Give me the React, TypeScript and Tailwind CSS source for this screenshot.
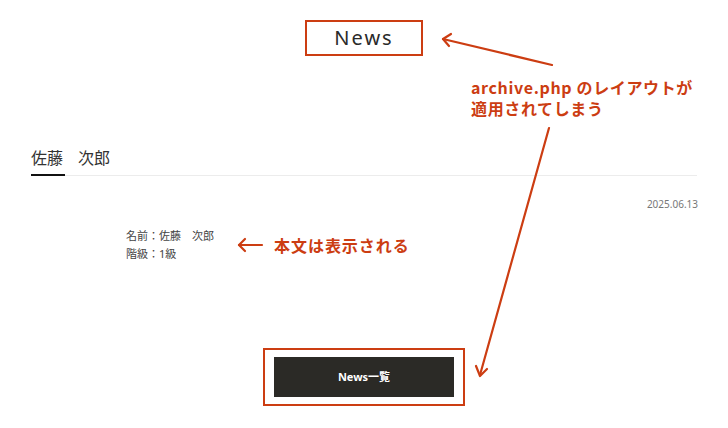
import React from "react";

const RED = "#cc3d12";

export default function App() {
  return (
    <div
      className="relative w-[728px] h-[428px] overflow-hidden bg-white text-[#333]"
      style={{ fontFamily: '"Noto Sans", "Noto Sans CJK JP", sans-serif' }}
    >
      {/* Header */}
      <div className="flex justify-center pt-[20px]">
        <div className="flex h-[36px] w-[118px] items-center justify-center border-2 border-[#cc3d12]">
          <span className="text-[20px] leading-none tracking-[0.1em] text-[#2a2a2a]">News</span>
        </div>
      </div>

      {/* Tabs */}
      <div className="mx-[31px] mt-[90px] flex gap-[13px] border-b border-[#ececec]">
        <div className="-mb-px border-b-2 border-[#111] pb-[4px] pr-[2px] text-[16px] leading-[24px] text-[#333]">
          佐藤
        </div>
        <div className="pb-[4px] text-[16px] leading-[24px] text-[#333]">次郎</div>
      </div>

      {/* Date */}
      <div className="mx-[30px] mt-[21px] flex justify-end text-[10px] leading-[14px] text-[#777]">
        2025.06.13
      </div>

      {/* Body */}
      <div className="ml-[126px] mt-[16px] text-[11px] leading-[18px] text-[#444]">
        <p>名前：佐藤　次郎</p>
        <p>階級：1級</p>
      </div>

      {/* Button */}
      <div className="mt-[85px] flex justify-center">
        <div className="border-2 border-[#cc3d12] px-[9px] py-[7px]">
          <button className="flex h-[40px] w-[180px] items-center justify-center bg-[#2b2a26] text-[11px] font-bold text-white">
            News一覧
          </button>
        </div>
      </div>

      {/* Annotations */}
      <svg className="pointer-events-none absolute left-0 top-0" width="728" height="428" viewBox="0 0 728 428">
        <g stroke={RED} strokeWidth="2.2" fill="none" strokeLinecap="round" strokeLinejoin="round">
          <line x1="552" y1="65" x2="443" y2="39" />
          <polyline points="451,34 443,39 449,46" />
          <line x1="549" y1="128" x2="480" y2="375" />
          <polyline points="476,366 480,376 487,369" />
          <line x1="239" y1="245" x2="262" y2="245" />
          <polyline points="245,239 239,245 245,251" />
        </g>
      </svg>

      <div
        className="absolute left-[471px] top-[77px] text-[16px] font-bold leading-[21px] tracking-[0.04em] text-[#cc3d12]"
        style={{ fontFamily: '"Noto Sans CJK JP", sans-serif' }}
      >
        <p>archive.php のレイアウトが</p>
        <p>適用されてしまう</p>
      </div>

      <div
        className="absolute left-[274px] top-[235px] text-[16px] font-bold leading-[21px] tracking-[0.06em] text-[#cc3d12]"
        style={{ fontFamily: '"Noto Sans CJK JP", sans-serif' }}
      >
        本文は表示される
      </div>
    </div>
  );
}
